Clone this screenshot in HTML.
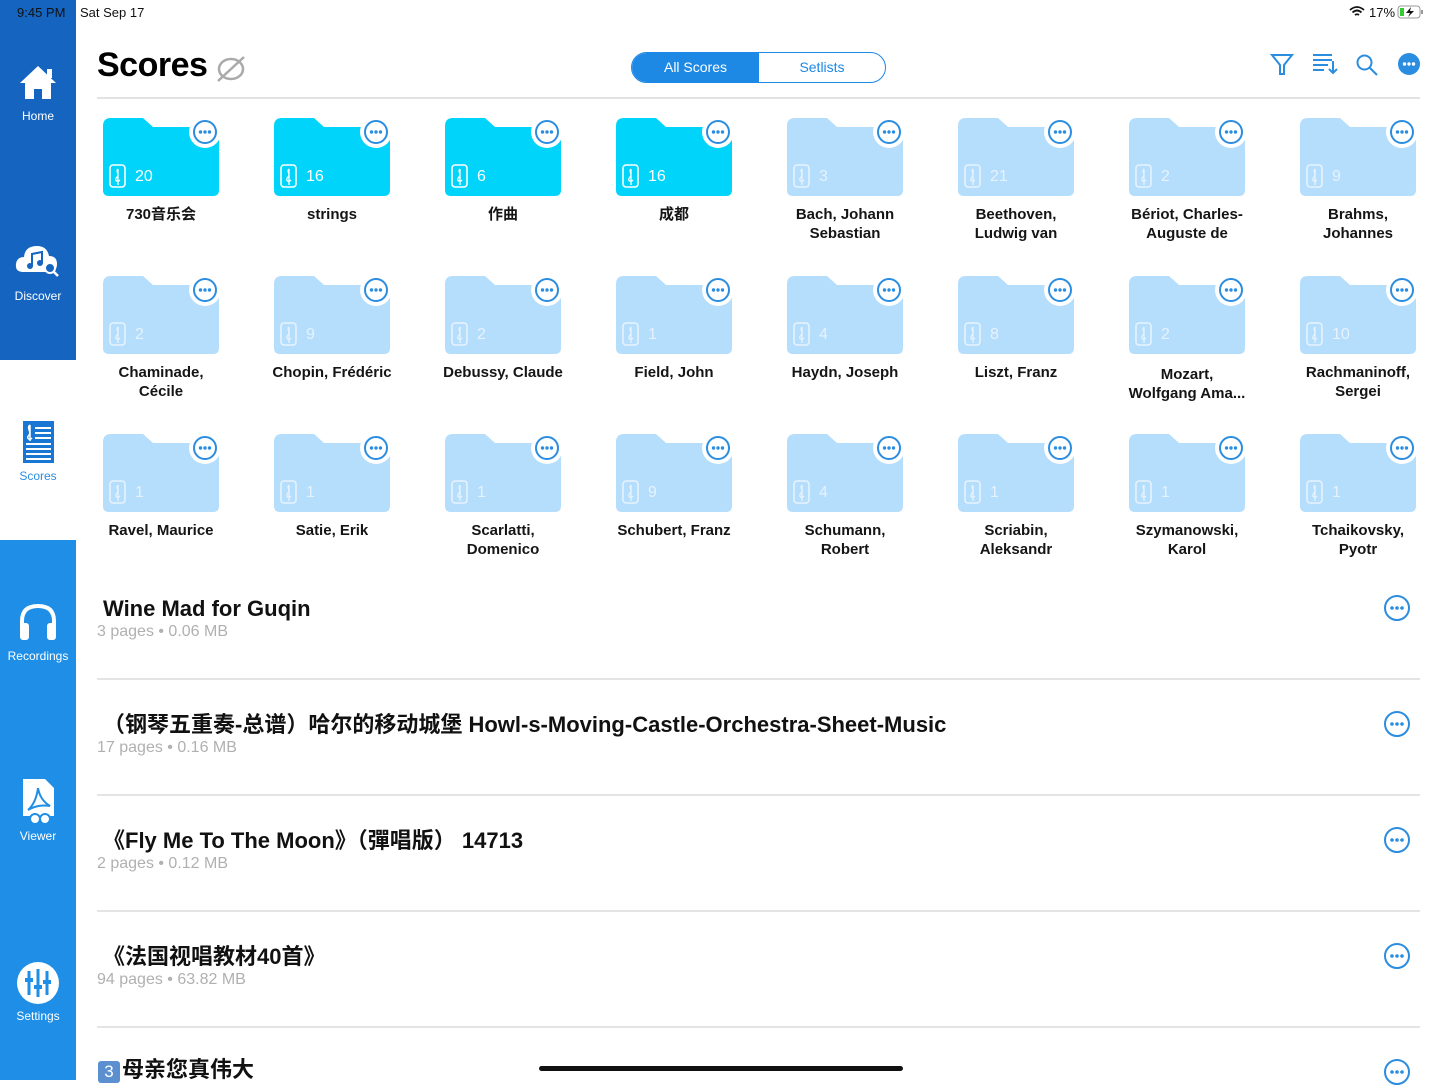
<!DOCTYPE html>
<html><head><meta charset="utf-8"><style>
*{margin:0;padding:0;box-sizing:border-box}
body{width:1441px;height:1080px;position:relative;overflow:hidden;background:#fff;font-family:"Liberation Sans","Noto Sans CJK SC",sans-serif;color:#111}
.a{position:absolute}
.sb{position:absolute;left:0;width:76px}
.nav{position:absolute;left:0;width:76px;text-align:center;color:#fff;font-size:12px}
.f{position:absolute;width:116px;height:78px}
.lb{position:absolute;width:160px;text-align:center;font-weight:bold;font-size:15px;line-height:19px;color:#151515}
.cnt{position:absolute;font-size:16px;line-height:20px;color:#fff}
.t{position:absolute;left:103px;font-weight:bold;font-size:22px;line-height:28px;height:28px;color:#111;white-space:nowrap}
.s{position:absolute;left:97px;font-size:16px;line-height:20px;color:#b0b0b0}
.sep{position:absolute;left:97px;width:1323px;height:2px;background:#e4e4e4}
.mo{position:absolute;left:1383px}
</style></head><body>
<svg width="0" height="0" style="position:absolute">
<defs>
<symbol id="fc" viewBox="0 0 116 78"><path d="M0,8 Q0,0 8,0 H40 L50,9 H110 Q116,9 116,15 V72 Q116,78 110,78 H6 Q0,78 0,72 Z" fill="#00d4fa"/><circle cx="102" cy="14" r="16" fill="#fff"/><circle cx="102" cy="14" r="11" fill="#fff" stroke="#2b8de0" stroke-width="2"/><circle cx="97.5" cy="14" r="1.7" fill="#2b8de0"/><circle cx="102" cy="14" r="1.7" fill="#2b8de0"/><circle cx="106.5" cy="14" r="1.7" fill="#2b8de0"/><rect x="7" y="47" width="15" height="22" rx="3" fill="none" stroke="#fff" stroke-width="1.6"/><path d="M15,51 C12,53 17,56 14,59 C11,62 14,65 17,62 M15,51 V67" fill="none" stroke="#fff" stroke-width="1.3"/></symbol>
<symbol id="fl" viewBox="0 0 116 78"><path d="M0,8 Q0,0 8,0 H40 L50,9 H110 Q116,9 116,15 V72 Q116,78 110,78 H6 Q0,78 0,72 Z" fill="#b5ddfc"/><circle cx="102" cy="14" r="16" fill="#fff"/><circle cx="102" cy="14" r="11" fill="#fff" stroke="#2b8de0" stroke-width="2"/><circle cx="97.5" cy="14" r="1.7" fill="#2b8de0"/><circle cx="102" cy="14" r="1.7" fill="#2b8de0"/><circle cx="106.5" cy="14" r="1.7" fill="#2b8de0"/><rect x="7" y="47" width="15" height="22" rx="3" fill="none" stroke="#e6f3fe" stroke-width="1.6"/><path d="M15,51 C12,53 17,56 14,59 C11,62 14,65 17,62 M15,51 V67" fill="none" stroke="#e6f3fe" stroke-width="1.3"/></symbol>
<symbol id="mo" viewBox="0 0 28 28"><circle cx="14" cy="14" r="12" fill="none" stroke="#2b8de0" stroke-width="2"/><circle cx="9" cy="14" r="1.8" fill="#2b8de0"/><circle cx="14" cy="14" r="1.8" fill="#2b8de0"/><circle cx="19" cy="14" r="1.8" fill="#2b8de0"/></symbol>
</defs></svg>

<div class="sb" style="top:0;height:360px;background:#1565c0"></div>
<div class="sb" style="top:360px;height:180px;background:#fff"></div>
<div class="sb" style="top:540px;height:540px;background:#1e8ee6"></div>

<div class="a" style="left:17px;top:5px;font-size:13px;color:#111">9:45 PM</div>
<div class="a" style="left:80px;top:5px;font-size:13px;color:#111">Sat Sep 17</div>
<div class="a" style="left:1369px;top:5px;font-size:13px;color:#111">17%</div>
<svg class="a" style="left:1349px;top:6px" width="16" height="12"><path d="M1,4 Q8,-2 15,4 M3.5,6.5 Q8,2.5 12.5,6.5 M6,9 Q8,7.5 10,9" stroke="#111" stroke-width="1.8" fill="none"/></svg>
<svg class="a" style="left:1397px;top:5px" width="28" height="14"><rect x="1" y="1" width="22" height="12" rx="3" fill="none" stroke="#999"/><rect x="3" y="3" width="4" height="8" fill="#3c3"/><rect x="24" y="5" width="2" height="4" fill="#999"/><path d="M14,2 L9,8 H13 L11,12 L17,6 H13 Z" fill="#111"/></svg>

<svg class="a" style="left:19px;top:64px" width="38" height="36"><path d="M19,2 L37,19 H32 V35 H23 V25 H15 V35 H6 V19 H1 Z" fill="#fff"/><rect x="28" y="5" width="5" height="9" fill="#fff"/></svg>
<div class="nav" style="top:109px">Home</div>
<svg class="a" style="left:15px;top:242px" width="46" height="36"><path d="M8,30 Q0,30 1,22 Q2,15 9,15 Q10,4 22,4 Q32,4 34,14 Q42,14 42,22 Q42,30 34,30 Z" fill="#fff"/><circle cx="35" cy="26" r="5" fill="#1565c0" stroke="#fff" stroke-width="2"/><path d="M38,29 L43,34" stroke="#fff" stroke-width="2.5"/><path d="M17,24 V12 L27,10 V21" stroke="#1565c0" stroke-width="2" fill="none"/><circle cx="15" cy="24" r="3" fill="#1565c0"/><circle cx="25" cy="21" r="3" fill="#1565c0"/></svg>
<div class="nav" style="top:289px">Discover</div>
<svg class="a" style="left:22px;top:420px" width="34" height="46"><rect x="1" y="1" width="31" height="42" fill="#1976d2"/><path d="M13,8 H29 M13,13 H29 M13,18 H29 M4,24 H29 M4,29 H29 M4,34 H29 M4,39 H29" stroke="#fff" stroke-width="2"/><path d="M8,5 C4,8 10,12 7,15 C4,18 7,21 10,18 M8,5 V21" stroke="#fff" stroke-width="1.5" fill="none"/></svg>
<div class="nav" style="top:469px;color:#2b8de0">Scores</div>
<svg class="a" style="left:18px;top:603px" width="40" height="38"><path d="M4,24 V18 Q4,3 20,3 Q36,3 36,18 V24" stroke="#fff" stroke-width="4" fill="none"/><rect x="2" y="20" width="9" height="17" rx="3" fill="#fff"/><rect x="29" y="20" width="9" height="17" rx="3" fill="#fff"/></svg>
<div class="nav" style="top:649px">Recordings</div>
<svg class="a" style="left:22px;top:778px" width="34" height="50"><path d="M1,1 H23 L32,10 V38 H1 Z" fill="#fff"/><path d="M16,10 Q14,25 6,32 Q16,26 28,28 Q18,22 16,10" stroke="#1e8ee6" stroke-width="2" fill="none"/><circle cx="13" cy="41" r="5" fill="#fff" stroke="#1e8ee6" stroke-width="2"/><circle cx="23" cy="41" r="5" fill="#fff" stroke="#1e8ee6" stroke-width="2"/></svg>
<div class="nav" style="top:829px">Viewer</div>
<svg class="a" style="left:16px;top:961px" width="44" height="44"><circle cx="22" cy="22" r="21" fill="#fff"/><path d="M13,10 V34 M22,8 V36 M31,10 V34" stroke="#1e8ee6" stroke-width="3"/><rect x="9" y="17" width="8" height="4" fill="#1e8ee6"/><rect x="18" y="24" width="8" height="4" fill="#1e8ee6"/><rect x="27" y="19" width="8" height="4" fill="#1e8ee6"/></svg>
<div class="nav" style="top:1009px">Settings</div>

<div class="a" style="left:97px;top:45px;font-size:34px;line-height:40px;font-weight:bold;color:#000;letter-spacing:-0.5px">Scores</div>
<svg class="a" style="left:215px;top:54px" width="32" height="28"><ellipse cx="16" cy="15" rx="12" ry="10" fill="none" stroke="#aaa" stroke-width="2.5"/><path d="M3,27 L29,3" stroke="#aaa" stroke-width="2.5"/></svg>
<div class="a" style="left:631px;top:52px;width:255px;height:31px;border:1.5px solid #1e88e5;border-radius:16px;overflow:hidden">
<div class="a" style="left:0;top:0;width:127px;height:100%;background:#1e88e5;color:#fff;font-size:14px;line-height:28px;text-align:center">All Scores</div>
<div class="a" style="left:127px;top:0;width:126px;height:100%;color:#1e88e5;font-size:14px;line-height:28px;text-align:center">Setlists</div></div>
<svg class="a" style="left:1270px;top:52px" width="24" height="24"><path d="M2,3 H22 L14,13 V22 H10 V13 Z" fill="none" stroke="#2b8de0" stroke-width="2"/></svg>
<svg class="a" style="left:1312px;top:52px" width="26" height="24"><path d="M1,3 H20 M1,8 H20 M1,13 H16 M1,18 H12 M21,9 V21 M17,17 L21,21 L25,17" stroke="#2b8de0" stroke-width="2" fill="none"/></svg>
<svg class="a" style="left:1355px;top:53px" width="24" height="24"><circle cx="9.5" cy="9.5" r="7" fill="none" stroke="#2b8de0" stroke-width="2"/><path d="M14.5,14.5 L22,22" stroke="#2b8de0" stroke-width="2"/></svg>
<svg class="a" style="left:1397px;top:52px" width="24" height="24"><circle cx="12" cy="12" r="11" fill="#2b8de0"/><circle cx="7.5" cy="12" r="1.7" fill="#fff"/><circle cx="12" cy="12" r="1.7" fill="#fff"/><circle cx="16.5" cy="12" r="1.7" fill="#fff"/></svg>
<div class="a" style="left:97px;top:97px;width:1323px;height:2px;background:#e2e2e2"></div>

<svg class="f" style="left:103px;top:118px"><use href="#fc"/></svg><div class="cnt" style="left:135px;top:167px">20</div><div class="lb" style="left:81px;top:205px">730音乐会</div>
<svg class="f" style="left:274px;top:118px"><use href="#fc"/></svg><div class="cnt" style="left:306px;top:167px">16</div><div class="lb" style="left:252px;top:205px">strings</div>
<svg class="f" style="left:445px;top:118px"><use href="#fc"/></svg><div class="cnt" style="left:477px;top:167px">6</div><div class="lb" style="left:423px;top:205px">作曲</div>
<svg class="f" style="left:616px;top:118px"><use href="#fc"/></svg><div class="cnt" style="left:648px;top:167px">16</div><div class="lb" style="left:594px;top:205px">成都</div>
<svg class="f" style="left:787px;top:118px"><use href="#fl"/></svg><div class="cnt" style="left:819px;top:167px;color:#e6f3fe">3</div><div class="lb" style="left:765px;top:205px">Bach, Johann<br>Sebastian</div>
<svg class="f" style="left:958px;top:118px"><use href="#fl"/></svg><div class="cnt" style="left:990px;top:167px;color:#e6f3fe">21</div><div class="lb" style="left:936px;top:205px">Beethoven,<br>Ludwig van</div>
<svg class="f" style="left:1129px;top:118px"><use href="#fl"/></svg><div class="cnt" style="left:1161px;top:167px;color:#e6f3fe">2</div><div class="lb" style="left:1107px;top:205px">Bériot, Charles-<br>Auguste de</div>
<svg class="f" style="left:1300px;top:118px"><use href="#fl"/></svg><div class="cnt" style="left:1332px;top:167px;color:#e6f3fe">9</div><div class="lb" style="left:1278px;top:205px">Brahms,<br>Johannes</div>
<svg class="f" style="left:103px;top:276px"><use href="#fl"/></svg><div class="cnt" style="left:135px;top:325px;color:#e6f3fe">2</div><div class="lb" style="left:81px;top:363px">Chaminade,<br>Cécile</div>
<svg class="f" style="left:274px;top:276px"><use href="#fl"/></svg><div class="cnt" style="left:306px;top:325px;color:#e6f3fe">9</div><div class="lb" style="left:252px;top:363px">Chopin, Frédéric</div>
<svg class="f" style="left:445px;top:276px"><use href="#fl"/></svg><div class="cnt" style="left:477px;top:325px;color:#e6f3fe">2</div><div class="lb" style="left:423px;top:363px">Debussy, Claude</div>
<svg class="f" style="left:616px;top:276px"><use href="#fl"/></svg><div class="cnt" style="left:648px;top:325px;color:#e6f3fe">1</div><div class="lb" style="left:594px;top:363px">Field, John</div>
<svg class="f" style="left:787px;top:276px"><use href="#fl"/></svg><div class="cnt" style="left:819px;top:325px;color:#e6f3fe">4</div><div class="lb" style="left:765px;top:363px">Haydn, Joseph</div>
<svg class="f" style="left:958px;top:276px"><use href="#fl"/></svg><div class="cnt" style="left:990px;top:325px;color:#e6f3fe">8</div><div class="lb" style="left:936px;top:363px">Liszt, Franz</div>
<svg class="f" style="left:1129px;top:276px"><use href="#fl"/></svg><div class="cnt" style="left:1161px;top:325px;color:#e6f3fe">2</div><div class="lb" style="left:1107px;top:365px">Mozart,<br>Wolfgang Ama...</div>
<svg class="f" style="left:1300px;top:276px"><use href="#fl"/></svg><div class="cnt" style="left:1332px;top:325px;color:#e6f3fe">10</div><div class="lb" style="left:1278px;top:363px">Rachmaninoff,<br>Sergei</div>
<svg class="f" style="left:103px;top:434px"><use href="#fl"/></svg><div class="cnt" style="left:135px;top:483px;color:#e6f3fe">1</div><div class="lb" style="left:81px;top:521px">Ravel, Maurice</div>
<svg class="f" style="left:274px;top:434px"><use href="#fl"/></svg><div class="cnt" style="left:306px;top:483px;color:#e6f3fe">1</div><div class="lb" style="left:252px;top:521px">Satie, Erik</div>
<svg class="f" style="left:445px;top:434px"><use href="#fl"/></svg><div class="cnt" style="left:477px;top:483px;color:#e6f3fe">1</div><div class="lb" style="left:423px;top:521px">Scarlatti,<br>Domenico</div>
<svg class="f" style="left:616px;top:434px"><use href="#fl"/></svg><div class="cnt" style="left:648px;top:483px;color:#e6f3fe">9</div><div class="lb" style="left:594px;top:521px">Schubert, Franz</div>
<svg class="f" style="left:787px;top:434px"><use href="#fl"/></svg><div class="cnt" style="left:819px;top:483px;color:#e6f3fe">4</div><div class="lb" style="left:765px;top:521px">Schumann,<br>Robert</div>
<svg class="f" style="left:958px;top:434px"><use href="#fl"/></svg><div class="cnt" style="left:990px;top:483px;color:#e6f3fe">1</div><div class="lb" style="left:936px;top:521px">Scriabin,<br>Aleksandr</div>
<svg class="f" style="left:1129px;top:434px"><use href="#fl"/></svg><div class="cnt" style="left:1161px;top:483px;color:#e6f3fe">1</div><div class="lb" style="left:1107px;top:521px">Szymanowski,<br>Karol</div>
<svg class="f" style="left:1300px;top:434px"><use href="#fl"/></svg><div class="cnt" style="left:1332px;top:483px;color:#e6f3fe">1</div><div class="lb" style="left:1278px;top:521px">Tchaikovsky,<br>Pyotr</div>

<div class="t" style="top:595px">Wine Mad for Guqin</div>
<div class="s" style="top:622px">3 pages • 0.06 MB</div>
<svg class="mo" style="top:594px" width="28" height="28"><use href="#mo"/></svg>
<div class="sep" style="top:678px"></div>
<div class="t" style="top:711px">（钢琴五重奏-总谱）哈尔的移动城堡 Howl-s-Moving-Castle-Orchestra-Sheet-Music</div>
<div class="s" style="top:738px">17 pages • 0.16 MB</div>
<svg class="mo" style="top:710px" width="28" height="28"><use href="#mo"/></svg>
<div class="sep" style="top:794px"></div>
<div class="t" style="top:827px">《Fly Me To The Moon》（彈唱版） 14713</div>
<div class="s" style="top:854px">2 pages • 0.12 MB</div>
<svg class="mo" style="top:826px" width="28" height="28"><use href="#mo"/></svg>
<div class="sep" style="top:910px"></div>
<div class="t" style="top:943px">《法国视唱教材40首》</div>
<div class="s" style="top:970px">94 pages • 63.82 MB</div>
<svg class="mo" style="top:942px" width="28" height="28"><use href="#mo"/></svg>
<div class="sep" style="top:1026px"></div>
<div class="a" style="left:98px;top:1061px;width:22px;height:22px;background:#5b8fd0;border-radius:3px;color:#fff;font-size:17px;text-align:center;line-height:22px">3</div>
<div class="t" style="top:1056px;left:122px">母亲您真伟大</div>
<svg class="mo" style="top:1058px" width="28" height="28"><use href="#mo"/></svg>
<div class="a" style="left:539px;top:1066px;width:364px;height:5px;border-radius:3px;background:#111"></div>
</body></html>
